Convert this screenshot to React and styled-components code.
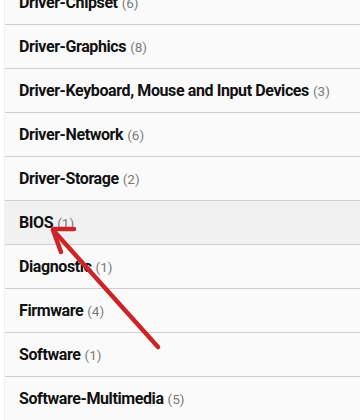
import styled, { createGlobalStyle } from 'styled-components';

const Global = createGlobalStyle`
  html, body {
    margin: 0;
    background: #ffffff;
    overflow: hidden;
  }
`;

const Page = styled.div`
  position: relative;
  width: 360px;
  height: 420px;
  overflow: hidden;
  padding-left: 4px;
  box-sizing: border-box;
`;

const List = styled.ul`
  list-style: none;
  margin: -19px 0 0 0;
  padding: 0;
  background: #fafafa;
  border-left: 1px solid #f0f0f0;
`;

const Row = styled.li`
  height: 43px;
  display: flex;
  align-items: center;
  padding-left: 14px;
  border-bottom: 1px solid #cfcfcf;
  background: ${p => (p.active ? '#f1f1f1' : 'transparent')};
  font-family: Roboto, "Liberation Sans", sans-serif;
`;

const Name = styled.span`
  font-weight: 700;
  font-size: 16px;
  color: #111;
  letter-spacing: -0.4px;
`;

const Count = styled.span`
  margin-left: 4px;
  font-size: 13.5px;
  color: #7a7a7a;
`;

const Arrow = styled.svg`
  position: absolute;
  left: 0;
  top: 0;
  pointer-events: none;
`;

const items = [
  ['Driver-Chipset', 6],
  ['Driver-Graphics', 8],
  ['Driver-Keyboard, Mouse and Input Devices', 3],
  ['Driver-Network', 6],
  ['Driver-Storage', 2],
  ['BIOS', 1],
  ['Diagnostic', 1],
  ['Firmware', 4],
  ['Software', 1],
  ['Software-Multimedia', 5],
];

export default function App() {
  return (
    <Page>
      <Global />
      <List>
        {items.map(([name, n]) => (
          <Row key={name} active={name === 'BIOS'}>
            <Name>{name}</Name>
            <Count>({n})</Count>
          </Row>
        ))}
      </List>
      <Arrow width="360" height="420">
        <g stroke="#cc2529" strokeWidth="4.5" strokeLinecap="round" fill="none">
          <line x1="158" y1="347" x2="53" y2="230" />
          <line x1="53" y1="229" x2="74" y2="229" />
          <line x1="53" y1="230" x2="61" y2="252" />
        </g>
      </Arrow>
    </Page>
  );
}
